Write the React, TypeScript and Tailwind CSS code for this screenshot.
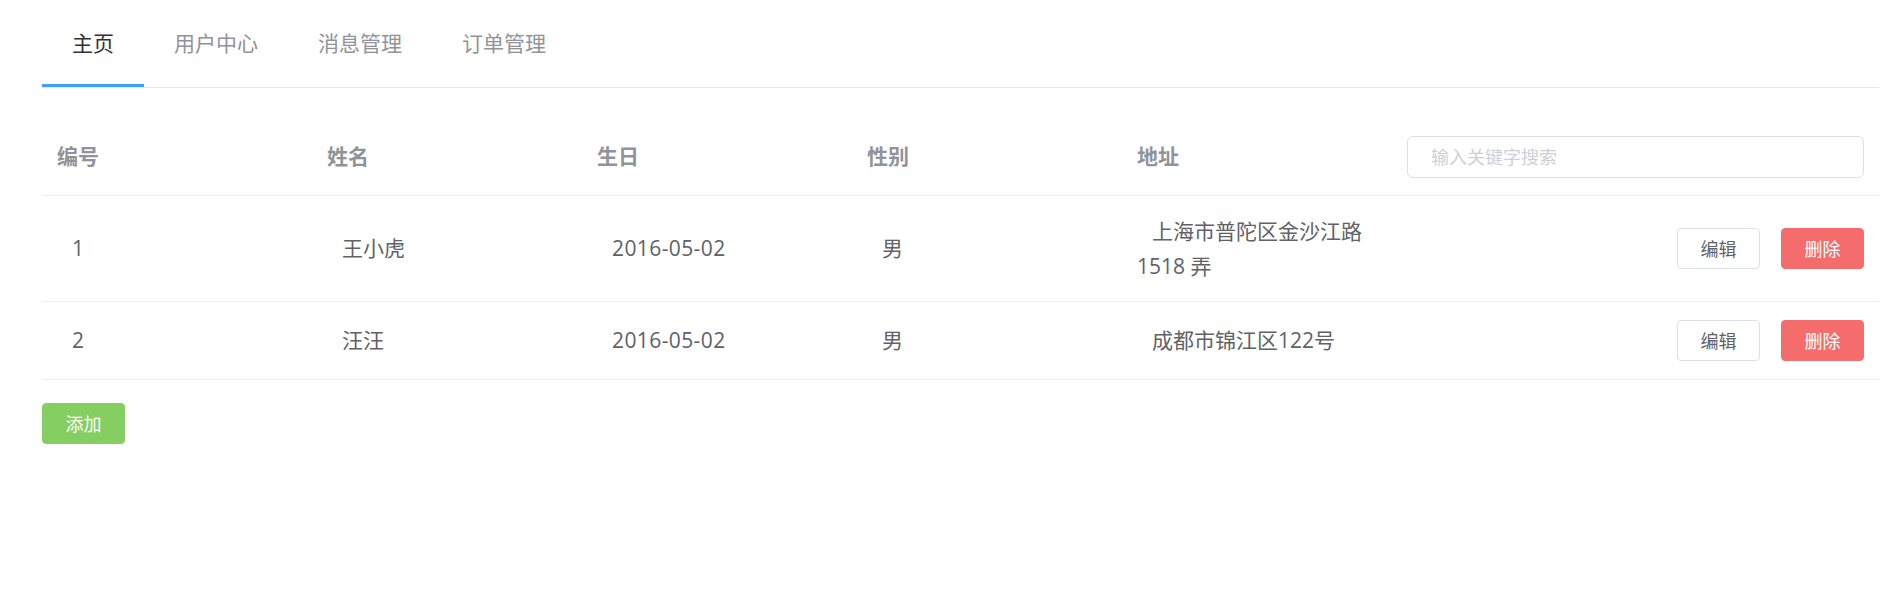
import React from "react"

const tabs = ["主页", "用户中心", "消息管理", "订单管理"]

const rows = [
  { id: "1", name: "王小虎", date: "2016-05-02", sex: "男", address: "上海市普陀区金沙江路 1518 弄" },
  { id: "2", name: "汪汪", date: "2016-05-02", sex: "男", address: "成都市锦江区122号" },
]

const headers = ["编号", "姓名", "生日", "性别", "地址"]

const App = () => {
  return (
    <div className="min-h-screen bg-white pl-[42px] pr-[24px] font-[family-name:'Open_Sans','Noto_Sans_CJK_SC',sans-serif]">
      {/* Tabs */}
      <div className="flex">
        {tabs.map((t, i) => (
          <div key={t} className="flex flex-col pt-[28px]">
            <span
              className={
                "px-[30px] text-[21px] leading-[30px] " +
                (i === 0 ? "text-[#303133]" : "text-[#909399]")
              }
            >
              {t}
            </span>
            <div className={"mt-[26px] h-[3px] w-full " + (i === 0 ? "bg-[#409eff]" : "bg-transparent")} />
          </div>
        ))}
      </div>
      <div className="h-px bg-[#e4e7ed]" />

      {/* Table */}
      <div className="mt-[30px]">
        <div className="flex h-[78px] items-center border-b border-[#ebeef5]">
          {headers.map((h) => (
            <div key={h} className="w-[270px] shrink-0 px-[15px] text-[21px] font-bold leading-[34.5px] text-[#909399]">
              {h}
            </div>
          ))}
          <div className="flex-1 px-[15px]">
            <input
              placeholder="输入关键字搜索"
              className="h-[42px] w-full rounded-[6px] border border-[#dcdfe6] pl-[23px] text-[18px] text-[#606266] outline-none placeholder:text-[#cdd0d7]"
            />
          </div>
        </div>

        {rows.map((r, idx) => (
          <div
            key={r.id}
            className={
              "flex items-center border-b border-[#ebeef5] text-[21px] leading-[34.5px] text-[#606266] " +
              (idx === 0 ? "h-[106px]" : "h-[78px]")
            }
          >
            <div className="w-[270px] shrink-0 px-[15px]">
              <span className="ml-[15px]">{r.id}</span>
            </div>
            <div className="w-[270px] shrink-0 px-[15px]">
              <span className="ml-[15px]">{r.name}</span>
            </div>
            <div className="w-[270px] shrink-0 px-[15px]">
              <span className="ml-[15px] tracking-[0.4px]">{r.date}</span>
            </div>
            <div className="w-[270px] shrink-0 px-[15px]">
              <span className="ml-[15px]">{r.sex}</span>
            </div>
            <div className="w-[270px] shrink-0 px-[15px]">
              <span className="ml-[15px]">{r.address}</span>
            </div>
            <div className="flex flex-1 justify-end gap-[21px] px-[15px]">
              <button className="h-[41px] w-[83px] rounded-[4px] border border-[#dcdfe6] bg-white text-[18px] leading-none text-[#606266]">
                编辑
              </button>
              <button className="h-[41px] w-[83px] rounded-[4px] border border-[#f56c6c] bg-[#f56c6c] text-[18px] leading-none text-white">
                删除
              </button>
            </div>
          </div>
        ))}
      </div>

      <button className="mt-[23px] h-[41px] w-[83px] rounded-[4px] border border-[#85ce61] bg-[#85ce61] text-[18px] leading-none text-white">
        添加
      </button>
    </div>
  )
}

export default App
